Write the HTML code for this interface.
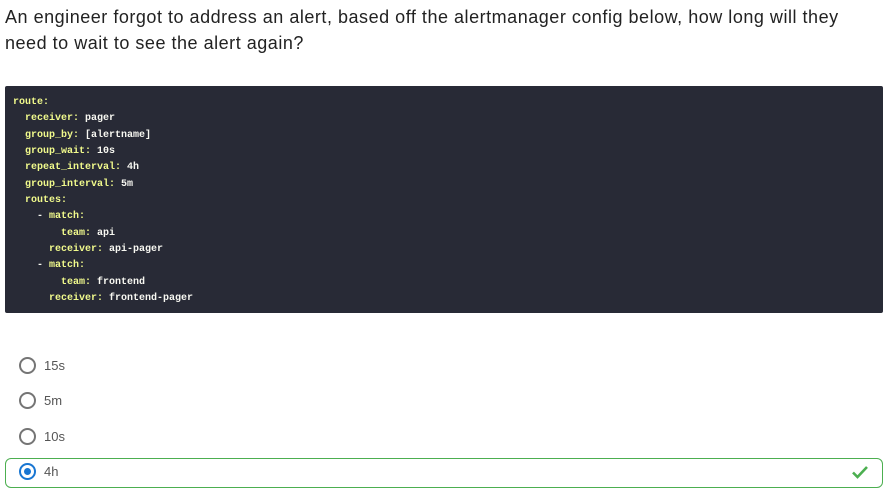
<!DOCTYPE html>
<html><head><style>
body{margin:0;width:891px;height:503px;background:#fff;font-family:"Liberation Sans",sans-serif;position:relative;overflow:hidden}
.q{position:absolute;left:5px;top:4px;font-size:18px;line-height:26px;color:#222;width:870px;letter-spacing:0.52px}
pre{position:absolute;left:5px;top:86px;width:878px;height:227px;margin:0;background:#282a36;border-radius:2px;box-sizing:border-box;padding:9px 8px;font-family:"Liberation Mono","DejaVu Sans Mono",monospace;font-size:10px;line-height:16.35px;font-weight:bold;color:#f8f8f2}
.k{color:#f1fa8c}
.r{position:absolute;left:19px;width:13px;height:13px;border:2px solid #757575;border-radius:50%}
.t{position:absolute;left:44px;font-size:13px;color:#555}
.sel{position:absolute;left:5px;top:458px;width:876px;height:28px;border:1px solid #4caf50;border-radius:6px}
</style></head><body>
<div class="q">An engineer forgot to address an alert, based off the alertmanager config below, how long will they<br>need to wait to see the alert again?</div>
<pre><span class="k">route:</span>
  <span class="k">receiver:</span> pager
  <span class="k">group_by:</span> [alertname]
  <span class="k">group_wait:</span> 10s
  <span class="k">repeat_interval:</span> 4h
  <span class="k">group_interval:</span> 5m
  <span class="k">routes:</span>
    - <span class="k">match:</span>
        <span class="k">team:</span> api
      <span class="k">receiver:</span> api-pager
    - <span class="k">match:</span>
        <span class="k">team:</span> frontend
      <span class="k">receiver:</span> frontend-pager</pre>
<div class="r" style="top:357px"></div><div class="t" style="top:358px">15s</div>
<div class="r" style="top:392px"></div><div class="t" style="top:393px">5m</div>
<div class="r" style="top:428px"></div><div class="t" style="top:429px">10s</div>
<div class="sel"></div>
<div class="r" style="top:463px;border-color:#1976d2"><div style="position:absolute;left:3px;top:3px;width:7px;height:7px;border-radius:50%;background:#1976d2"></div></div>
<div class="t" style="top:464px">4h</div>
<svg style="position:absolute;left:851px;top:465px" width="18" height="14" viewBox="0 0 18 14"><path d="M2 7.5 L6.5 12 L16 2" fill="none" stroke="#4caf50" stroke-width="2.6"/></svg>
</body></html>
